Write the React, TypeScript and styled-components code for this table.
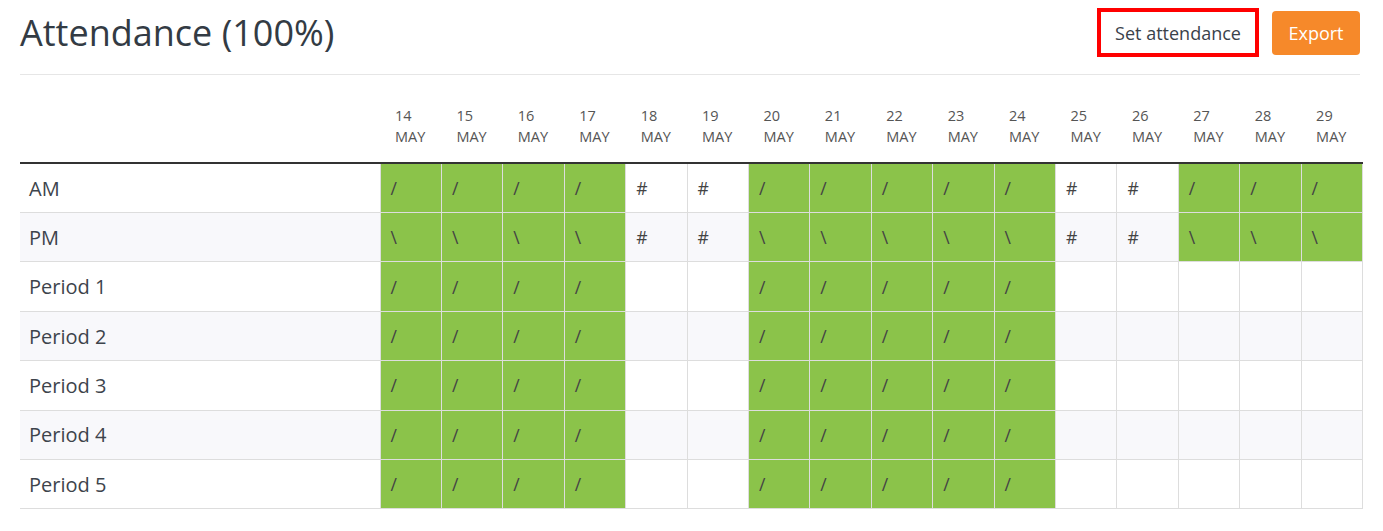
import styled, { createGlobalStyle } from "styled-components";

type Mark = "/" | "\\" | "#" | "";

const days = [14, 15, 16, 17, 18, 19, 20, 21, 22, 23, 24, 25, 26, 27, 28, 29];
const weekend = [18, 19, 25, 26];
const lessonsOff = [18, 19, 25, 26, 27, 28, 29];

const sessionRow = (label: string, mark: Mark) => ({
    label,
    cells: days.map((d) => (weekend.includes(d) ? "#" : mark) as Mark),
});

const periodRow = (label: string) => ({
    label,
    cells: days.map((d) => (lessonsOff.includes(d) ? "" : "/") as Mark),
});

const rows = [
    sessionRow("AM", "/"),
    sessionRow("PM", "\\"),
    periodRow("Period 1"),
    periodRow("Period 2"),
    periodRow("Period 3"),
    periodRow("Period 4"),
    periodRow("Period 5"),
];

export default function App() {
    return (
        <>
            <GlobalStyle />
            <Page>
                <Header>
                    <Title>Attendance (100%)</Title>
                    <Actions>
                        <SetButton>Set attendance</SetButton>
                        <ExportButton>Export</ExportButton>
                    </Actions>
                </Header>
                <Divider />
                <Table>
                    <colgroup>
                        <col style={{ width: 360 }} />
                        {days.map((d) => (
                            <col key={d} />
                        ))}
                    </colgroup>
                    <thead>
                        <tr>
                            <HeadCell />
                            {days.map((d) => (
                                <HeadCell key={d}>
                                    {d}
                                    <br />
                                    MAY
                                </HeadCell>
                            ))}
                        </tr>
                    </thead>
                    <tbody>
                        {rows.map((row, i) => (
                            <Row key={row.label} $striped={i % 2 === 1}>
                                <LabelCell>{row.label}</LabelCell>
                                {row.cells.map((mark, j) => (
                                    <MarkCell key={j} $present={mark === "/" || mark === "\\"}>
                                        {mark}
                                    </MarkCell>
                                ))}
                            </Row>
                        ))}
                    </tbody>
                </Table>
            </Page>
        </>
    );
}

const GlobalStyle = createGlobalStyle`
    body {
        margin: 0;
        background: #fff;
        font-family: "Open Sans", "Liberation Sans", sans-serif;
        color: #333;
    }
`;

const Page = styled.div`
    padding: 0 23px 0 20px;
`;

const Header = styled.div`
    display: flex;
    align-items: center;
    justify-content: space-between;
    padding: 8px 0;
`;

const Title = styled.h1`
    margin: 0;
    font-size: 36px;
    font-weight: 400;
    color: #333b44;
    line-height: 48px;
`;

const Actions = styled.div`
    display: flex;
    align-items: center;
    gap: 13px;
`;

const SetButton = styled.button`
    box-sizing: border-box;
    height: 49px;
    width: 162px;
    border: 4px solid #ff0000;
    background: #fff;
    font-family: inherit;
    font-size: 18px;
    color: #3a424b;
    padding: 0;
`;

const ExportButton = styled.button`
    box-sizing: border-box;
    height: 44px;
    width: 88px;
    border: none;
    border-radius: 4px;
    background: #f6892a;
    color: #fff;
    font-family: inherit;
    font-size: 18px;
    padding: 0;
`;

const Divider = styled.hr`
    margin: 9px 0 0;
    border: none;
    border-top: 1px solid #e6e6e6;
`;

const Table = styled.table`
    margin-top: 20px;
    width: calc(100% + 3px);
    table-layout: fixed;
    border-collapse: collapse;
`;

const HeadCell = styled.th`
    text-align: left;
    vertical-align: bottom;
    font-size: 14.5px;
    font-weight: 400;
    line-height: 20.6px;
    color: #555;
    padding: 11px 4px 15px 15px;
    border-bottom: 2px solid #333;
`;

const Row = styled.tr<{ $striped: boolean }>`
    height: 49.4px;
    background: ${(p) => (p.$striped ? "#f8f8fb" : "#fff")};
`;

const LabelCell = styled.td`
    padding: 0 9px;
    font-size: 20px;
    color: #3d444c;
    border-bottom: 1px solid #ddd;
`;

const MarkCell = styled.td<{ $present: boolean }>`
    padding: 0 10px;
    font-size: 17.5px;
    color: #444;
    border: 1px solid #ddd;
    background: ${(p) => (p.$present ? "#8bc34a" : "transparent")};
`;
